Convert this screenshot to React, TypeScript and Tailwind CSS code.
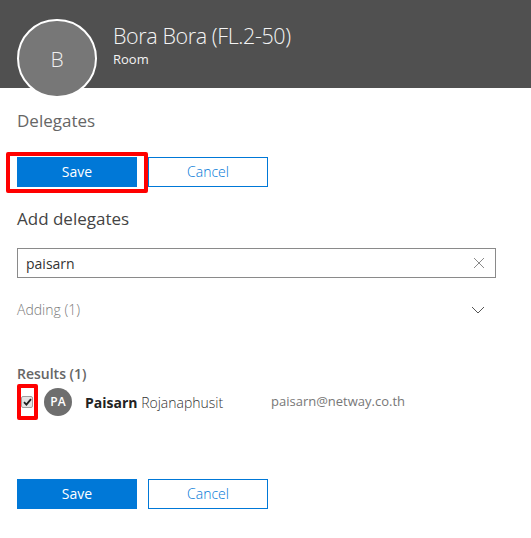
import React from "react";

const font = { fontFamily: '"Segoe UI", "Open Sans", "Noto Sans", sans-serif' };

function Buttons({ highlight }: { highlight?: boolean }) {
  return (
    <div className="relative flex gap-[11px]">
      {highlight && (
        <div className="absolute left-[-11px] top-[-5px] w-[142px] h-[41px] border-[4px] border-[#ff0000] rounded-[2px] pointer-events-none" />
      )}
      <button className="w-[120px] h-[30px] bg-[#0078d7] text-white text-[14px] leading-[30px]">
        Save
      </button>
      <button className="w-[120px] h-[30px] border border-[#0078d7] bg-white text-[#0078d7] text-[14px] leading-[28px] font-light">
        Cancel
      </button>
    </div>
  );
}

export default function App() {
  return (
    <div className="w-[531px] h-[538px] bg-white overflow-hidden" style={font}>
      <div className="h-[88px] bg-[#505050] flex items-start">
        <div className="ml-[17px] mt-[19px] w-[80px] h-[79px] shrink-0 rounded-full border-2 border-white bg-[#777777] flex items-center justify-center text-[#f0f0f0] text-[21px] font-light relative z-10">
          <span className="mt-[2px]">B</span>
        </div>
        <div className="ml-[16px] mt-[22px] flex flex-col">
          <div className="text-[#f4f4f4] text-[21.5px] leading-[28px] font-light tracking-[-0.4px]">
            Bora Bora (FL.2-50)
          </div>
          <div className="text-[#f4f4f4] text-[13px] leading-[18px]">Room</div>
        </div>
      </div>

      <div className="px-[17px] flex flex-col">
        <div className="mt-[21px] text-[17px] leading-[24px] text-[#666666]">Delegates</div>
        <div className="mt-[24px]">
          <Buttons highlight />
        </div>

        <div className="mt-[20px] text-[17px] leading-[24px] text-[#444444]">Add delegates</div>

        <div className="mt-[17px] w-[479px] h-[30px] border border-[#8a8a8a] flex items-center justify-between pl-[8px] pr-[10px]">
          <span className="text-[14px] text-[#333333]">paisarn</span>
          <svg width="12" height="12" viewBox="0 0 12 12" className="text-[#8a8a8a]">
            <path d="M1 1 L11 11 M11 1 L1 11" stroke="currentColor" strokeWidth="1" fill="none" />
          </svg>
        </div>

        <div className="mt-[22px] w-[479px] flex items-center justify-between pr-[11px]">
          <span className="text-[14px] leading-[20px] text-[#7a7a7a] font-light">Adding (1)</span>
          <svg width="14" height="8" viewBox="0 0 14 8" className="text-[#555555]">
            <path d="M1 1 L7 7 L13 1" stroke="currentColor" strokeWidth="1" fill="none" />
          </svg>
        </div>

        <div className="mt-[44px] text-[14px] leading-[20px] font-semibold text-[#666666]">Results (1)</div>

        <div className="relative mt-[4px] h-[28px] flex items-center">
          <div className="absolute left-0 top-[-4px] w-[21px] h-[36px] border-[4px] border-[#ff0000] rounded-[2px]" />
          <div className="ml-[4px] w-[12px] h-[12px] rounded-[2px] border border-[#a0a0a0] bg-[#e4e4e4] flex items-center justify-center">
            <svg width="9" height="8" viewBox="0 0 9 8">
              <path d="M1 4.2 L3.4 6.6 L8 1.2" stroke="#222" strokeWidth="1.8" fill="none" />
            </svg>
          </div>
          <div className="ml-[11px] w-[28px] h-[28px] rounded-full bg-[#6e6e6e] text-white text-[12px] flex items-center justify-center font-semibold">
            PA
          </div>
          <div className="ml-[13px] w-[186px] text-[14px] text-[#333333] whitespace-nowrap">
            <span className="font-bold text-[#222222]">Paisarn</span>{" "}
            <span className="font-light">Rojanaphusit</span>
          </div>
          <div className="text-[13px] text-[#777777] whitespace-nowrap">paisarn@netway.co.th</div>
        </div>

        <div className="mt-[63px]">
          <Buttons />
        </div>
      </div>
    </div>
  );
}
